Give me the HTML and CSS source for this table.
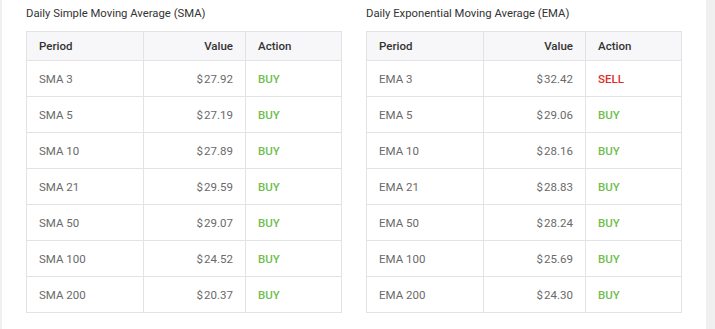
FILE: index.html
```html
<!DOCTYPE html>
<html lang="en">
<head>
    <meta charset="UTF-8">
    <title>Moving Averages</title>
    <link rel="stylesheet" href="styles.css">
</head>
<body>
<main class="panel">
    <!-- SMA -->
    <section class="ma-box">
        <h3 class="ma-title">Daily Simple Moving Average (SMA)</h3>
        <table class="ma-table">
            <thead>
                <tr><th class="col-period">Period</th><th class="col-value">Value</th><th class="col-action">Action</th></tr>
            </thead>
            <tbody>
                <tr><td>SMA 3</td><td class="value">$&#8202;27.92</td><td class="buy">BUY</td></tr>
                <tr><td>SMA 5</td><td class="value">$&#8202;27.19</td><td class="buy">BUY</td></tr>
                <tr><td>SMA 10</td><td class="value">$&#8202;27.89</td><td class="buy">BUY</td></tr>
                <tr><td>SMA 21</td><td class="value">$&#8202;29.59</td><td class="buy">BUY</td></tr>
                <tr><td>SMA 50</td><td class="value">$&#8202;29.07</td><td class="buy">BUY</td></tr>
                <tr><td>SMA 100</td><td class="value">$&#8202;24.52</td><td class="buy">BUY</td></tr>
                <tr><td>SMA 200</td><td class="value">$&#8202;20.37</td><td class="buy">BUY</td></tr>
            </tbody>
        </table>
    </section>
    <!-- EMA -->
    <section class="ma-box">
        <h3 class="ma-title">Daily Exponential Moving Average (EMA)</h3>
        <table class="ma-table">
            <thead>
                <tr><th class="col-period">Period</th><th class="col-value">Value</th><th class="col-action">Action</th></tr>
            </thead>
            <tbody>
                <tr><td>EMA 3</td><td class="value">$&#8202;32.42</td><td class="sell">SELL</td></tr>
                <tr><td>EMA 5</td><td class="value">$&#8202;29.06</td><td class="buy">BUY</td></tr>
                <tr><td>EMA 10</td><td class="value">$&#8202;28.16</td><td class="buy">BUY</td></tr>
                <tr><td>EMA 21</td><td class="value">$&#8202;28.83</td><td class="buy">BUY</td></tr>
                <tr><td>EMA 50</td><td class="value">$&#8202;28.24</td><td class="buy">BUY</td></tr>
                <tr><td>EMA 100</td><td class="value">$&#8202;25.69</td><td class="buy">BUY</td></tr>
                <tr><td>EMA 200</td><td class="value">$&#8202;24.30</td><td class="buy">BUY</td></tr>
            </tbody>
        </table>
    </section>
</main>
</body>
</html>
```

FILE: styles.css
```css
* { margin: 0; padding: 0; box-sizing: border-box; }
html, body { height: 100%; }

body {
    background: #f0f0f0;
    font-family: Roboto, "Liberation Sans", sans-serif;
    font-size: 11.5px;
    color: #6a6a6a;
}

.panel {
    width: 704px;
    height: 100%;
    margin-left: 2px;
    background: #fff;
    padding: 6px 0 0 24px;
    display: flex;
    gap: 24px;
}

.ma-title {
    font-size: 11.3px;
    font-weight: 400;
    line-height: 16px;
    color: #333;
    margin-bottom: 9px;
}

.ma-table {
    width: 316px;
    border-collapse: collapse;
    table-layout: fixed;
}
.ma-table th,
.ma-table td {
    border: 1px solid #e3e3e6;
    padding: 0 12px;
    text-align: left;
}
.ma-table th {
    height: 29px;
    background: #f7f7f9;
    color: #333;
    font-weight: 500;
}
.ma-table td {
    height: 36px;
}
.ma-table .col-period { width: 117px; }
.ma-table .col-value  { width: 102px; }
.ma-table .col-value,
.ma-table .value { text-align: right; }

.ma-table .buy {
    color: #70bd4f;
    font-weight: 500;
}
.ma-table .sell {
    color: #d9322b;
    font-weight: 500;
}
```
